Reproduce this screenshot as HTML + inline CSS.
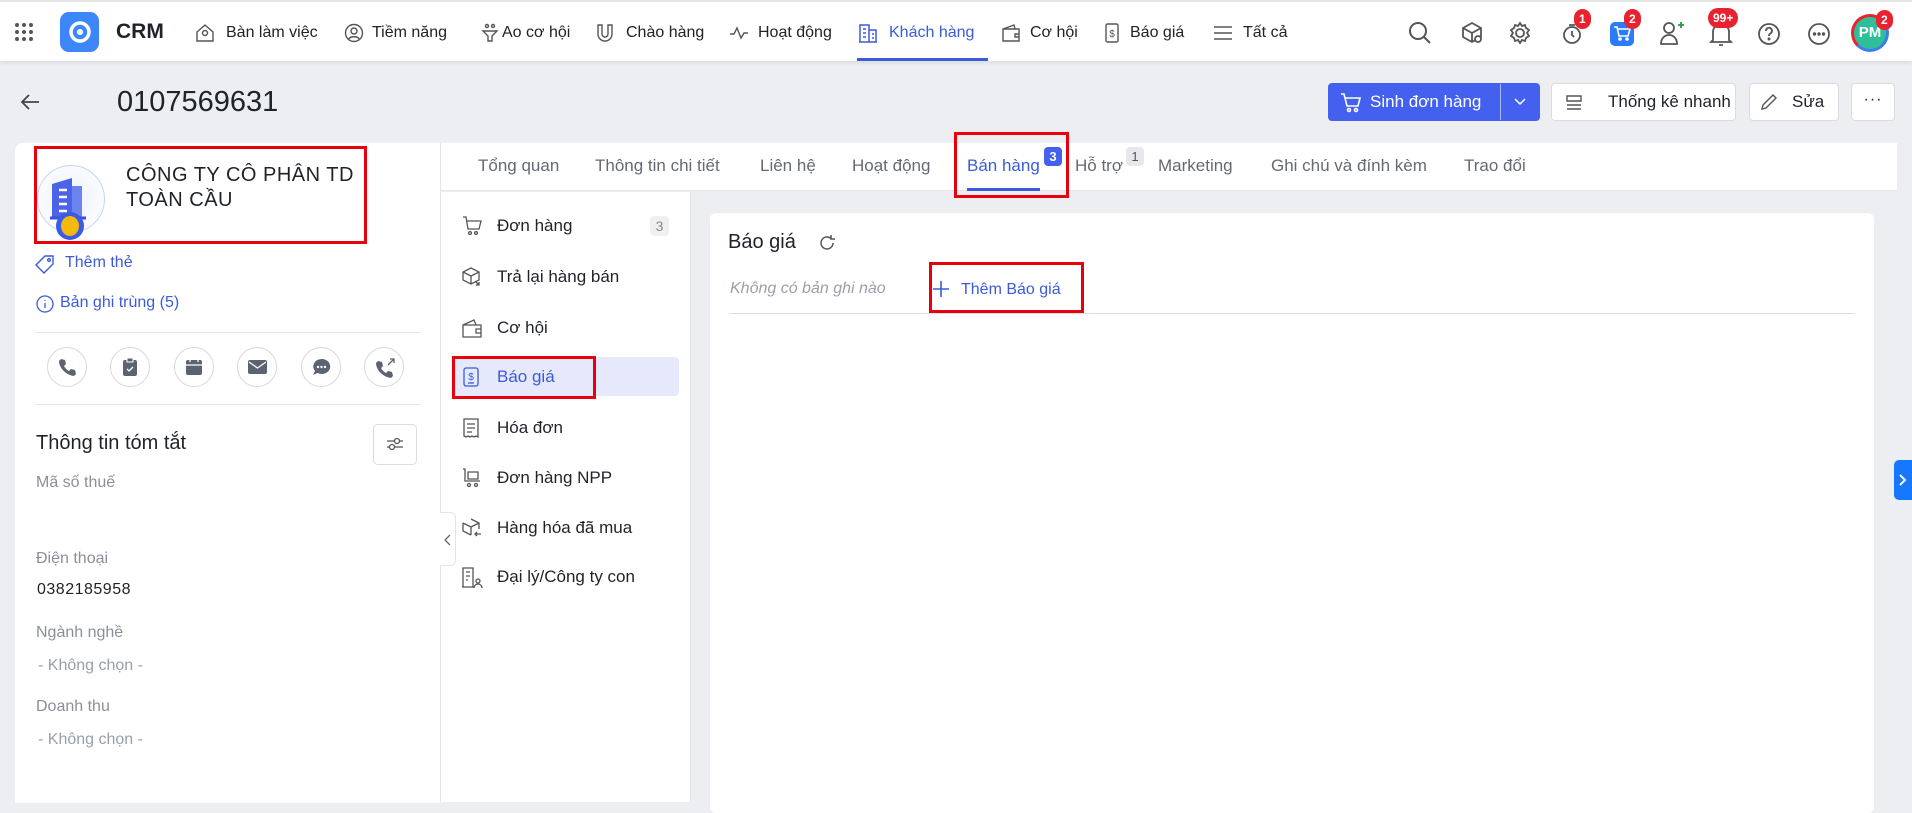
<!DOCTYPE html>
<html><head><meta charset="utf-8"><style>
*{box-sizing:border-box;margin:0;padding:0}
body{width:1912px;height:797px;overflow:hidden;background:#eceef1;font-family:"Liberation Sans","Noto Sans CJK SC",sans-serif;color:#1f2329;position:relative}
.a{position:absolute;white-space:nowrap}
.nav{position:absolute;left:0;top:0;width:1912px;height:61px;background:#fff;border-top:2px solid #e6e6e6;box-shadow:0 2px 4px rgba(0,0,0,.08)}
.ni{font-size:16px;color:#222;top:22px}
svg{overflow:visible}
.badge{position:absolute;background:#e8232f;color:#fff;font-size:12px;font-weight:bold;border-radius:10px;height:20px;line-height:20px;text-align:center;padding:0 5px}
.btn{position:absolute;background:#fff;border:1px solid #d9dce1;border-radius:4px;height:38px;top:83px;font-size:17px;line-height:36px}
.tab{top:156px;font-size:17px;color:#646a73}
.sn{font-size:17px;color:#1f2329}
.lbl{font-size:16px;color:#8a8f99;left:36px}
.circ{position:absolute;width:40px;height:40px;border:1px solid #d6d8dc;border-radius:50%;top:347px}
.red{position:absolute;border:3px solid #e8000b}
</style></head><body>
<div class="nav">
 <svg class="a" style="left:14px;top:20px" width="20" height="20"><g fill="#555"><circle cx="3" cy="3" r="2"/><circle cx="10" cy="3" r="2"/><circle cx="17" cy="3" r="2"/><circle cx="3" cy="10" r="2"/><circle cx="10" cy="10" r="2"/><circle cx="17" cy="10" r="2"/><circle cx="3" cy="17" r="2"/><circle cx="10" cy="17" r="2"/><circle cx="17" cy="17" r="2"/></g></svg>
 <div class="a" style="left:60px;top:10px;width:39px;height:40px;background:#3c86f7;border-radius:9px"></div>
 <svg class="a" style="left:68px;top:18px" width="24" height="24"><circle cx="12" cy="12" r="9" fill="none" stroke="#fff" stroke-width="3.5"/><circle cx="12" cy="12" r="3" fill="#fff"/></svg>
 <div class="a" style="left:116px;top:18px;font-size:21px;font-weight:bold">CRM</div>
 <svg class="a" style="left:195px;top:21px" width="20" height="20" fill="none" stroke="#555" stroke-width="1.4"><path d="M2 9L10 2l8 7v9H2z"/><circle cx="10" cy="10" r="2.5"/></svg>
 <div class="a ni" style="left:226px">Bàn làm việc</div>
 <svg class="a" style="left:344px;top:21px" width="20" height="20" fill="none" stroke="#555" stroke-width="1.4"><circle cx="10" cy="10" r="8.5"/><circle cx="10" cy="8" r="3"/><path d="M5 16c1-3 9-3 10 0"/></svg>
 <div class="a ni" style="left:372px">Tiềm năng</div>
 <svg class="a" style="left:480px;top:21px" width="20" height="20" fill="none" stroke="#555" stroke-width="1.4"><circle cx="7" cy="3" r="1.5"/><circle cx="13" cy="3" r="1.5"/><path d="M3 8h14l-5 5v5h-4v-5z"/></svg>
 <div class="a ni" style="left:502px">Ao cơ hội</div>
 <svg class="a" style="left:595px;top:21px" width="20" height="20" fill="none" stroke="#555" stroke-width="1.4"><path d="M3 2v9a7 7 0 0014 0V2h-4v9a3 3 0 01-6 0V2z"/></svg>
 <div class="a ni" style="left:626px">Chào hàng</div>
 <svg class="a" style="left:729px;top:21px" width="20" height="20" fill="none" stroke="#555" stroke-width="1.4"><path d="M1 11h4l3-6 4 10 3-5h4"/></svg>
 <div class="a ni" style="left:758px">Hoạt động</div>
 <svg class="a" style="left:858px;top:21px" width="20" height="20" fill="none" stroke="#3b5bdb" stroke-width="1.5"><path d="M2 19V2h9v17M11 7h7v12M1 19h18M5 6h3M5 10h3M5 14h3M14 11h2M14 15h2"/></svg>
 <div class="a ni" style="left:889px;color:#3b5bdb">Khách hàng</div>
 <div class="a" style="left:857px;top:56px;width:131px;height:3px;background:#3b5bdb"></div>
 <svg class="a" style="left:1001px;top:21px" width="20" height="20" fill="none" stroke="#555" stroke-width="1.4"><path d="M2 6h16v12H2zM2 6l11-4 1 4M14 11h4v3h-4z"/></svg>
 <div class="a ni" style="left:1030px">Cơ hội</div>
 <svg class="a" style="left:1102px;top:21px" width="20" height="20" fill="none" stroke="#555" stroke-width="1.4"><rect x="4" y="1" width="12" height="18" rx="1.5"/><text x="10" y="14" font-size="10" text-anchor="middle" fill="#555" stroke="none">$</text></svg>
 <div class="a ni" style="left:1130px">Báo giá</div>
 <svg class="a" style="left:1213px;top:21px" width="20" height="20" stroke="#555" stroke-width="1.6"><path d="M1 4h18M1 10h18M1 16h18"/></svg>
 <div class="a ni" style="left:1243px">Tất cả</div>

 <svg class="a" style="left:1408px;top:19px" width="24" height="24" fill="none" stroke="#555" stroke-width="2"><circle cx="10" cy="10" r="8"/><path d="M16 16l6 6"/></svg>
 <svg class="a" style="left:1460px;top:19px" width="24" height="24" fill="none" stroke="#555" stroke-width="1.8"><path d="M12 2l9 5v9l-9 5-9-5V7zM3 7l9 5 9-5M12 12v9"/><circle cx="18" cy="18" r="3" fill="#fff"/></svg>
 <svg class="a" style="left:1508px;top:19px" width="24" height="24" fill="none" stroke="#555" stroke-width="1.8"><circle cx="12" cy="12" r="4"/><path d="M12 2l2 3 3-1 1 3 3 2-2 3 2 3-3 2-1 3-3-1-2 3-2-3-3 1-1-3-3-2 2-3-2-3 3-2 1-3 3 1z"/></svg>
 <svg class="a" style="left:1560px;top:20px" width="24" height="24" fill="none" stroke="#555" stroke-width="1.8"><circle cx="12" cy="13" r="8"/><path d="M12 9v4l2 2M9 3h6"/></svg>
 <div class="badge" style="left:1574px;top:7px">1</div>
 <div class="a" style="left:1610px;top:20px;width:24px;height:24px;background:#2b7cf6;border-radius:5px"></div>
 <svg class="a" style="left:1613px;top:24px" width="18" height="16" fill="none" stroke="#fff" stroke-width="1.6"><path d="M1 1h3l2 9h9l2-7H5"/><circle cx="7" cy="13" r="1"/><circle cx="14" cy="13" r="1"/></svg>
 <div class="badge" style="left:1624px;top:7px">2</div>
 <svg class="a" style="left:1659px;top:18px" width="26" height="26" fill="none" stroke="#555" stroke-width="1.8"><circle cx="10" cy="8" r="5"/><path d="M2 24c0-6 4-9 8-9s8 3 8 9z"/><path d="M19 5h6M22 2v6" stroke="#2a9d3a"/></svg>
 <svg class="a" style="left:1709px;top:19px" width="24" height="26" fill="none" stroke="#555" stroke-width="1.8"><path d="M4 19V11a8 8 0 0116 0v8l2 2H2zM10 24h4"/></svg>
 <div class="badge" style="left:1708px;top:6px">99+</div>
 <svg class="a" style="left:1757px;top:20px" width="24" height="24" fill="none" stroke="#555" stroke-width="1.8"><circle cx="12" cy="12" r="10"/><path d="M9 9a3 3 0 115 2c-1 1-2 1-2 3"/><circle cx="12" cy="17" r=".6" fill="#555"/></svg>
 <svg class="a" style="left:1807px;top:20px" width="24" height="24" fill="none" stroke="#555" stroke-width="1.8"><circle cx="12" cy="12" r="10"/><circle cx="7.5" cy="12" r=".8" fill="#555"/><circle cx="12" cy="12" r=".8" fill="#555"/><circle cx="16.5" cy="12" r=".8" fill="#555"/></svg>
 <div class="a" style="left:1851px;top:12px;width:38px;height:38px;border-radius:50%;border:3px solid #e8232f;border-right-color:#3b7df0;border-bottom-color:#3b7df0;background:#2fbf98;color:#fff;font-weight:bold;font-size:15px;line-height:32px;text-align:center">PM</div>
 <div class="badge" style="left:1876px;top:8px">2</div>
</div>

<svg class="a" style="left:20px;top:93px" width="20" height="18" fill="none" stroke="#444" stroke-width="1.8"><path d="M19 9H2M9 2L2 9l7 7"/></svg>
<div class="a" style="left:117px;top:86px;font-size:29px;color:#1f2329">0107569631</div>
<div class="btn" style="left:1328px;width:212px;background:#4361ee;border-color:#4361ee;color:#fff"></div>
<svg class="a" style="left:1340px;top:93px" width="22" height="20" fill="none" stroke="#fff" stroke-width="1.6"><path d="M1 1h3l3 12h11l2-8H5"/><circle cx="9" cy="17" r="1.5"/><circle cx="16" cy="17" r="1.5"/></svg>
<div class="a" style="left:1370px;top:92px;color:#fff;font-size:17px">Sinh đơn hàng</div>
<div class="a" style="left:1500px;top:84px;width:1px;height:36px;background:#aab8f6"></div>
<svg class="a" style="left:1514px;top:98px" width="12" height="8" fill="none" stroke="#fff" stroke-width="1.5"><path d="M1 1l5 5 5-5"/></svg>
<div class="btn" style="left:1551px;width:185px;padding-left:56px">Thống kê nhanh</div>
<svg class="a" style="left:1566px;top:94px" width="16" height="16" fill="none" stroke="#555" stroke-width="1.4"><path d="M1 2h14v5H1zM1 11h14M1 15h14"/></svg>
<div class="btn" style="left:1749px;width:90px;padding-left:42px">Sửa</div>
<svg class="a" style="left:1760px;top:93px" width="18" height="18" fill="none" stroke="#555" stroke-width="1.4"><path d="M2 16l1-4L13 2l3 3L6 15z"/></svg>
<div class="btn" style="left:1851px;width:44px;text-align:center;font-size:16px;letter-spacing:1px;line-height:32px">···</div>

<!-- left panel -->
<div class="a" style="left:15px;top:143px;width:425px;height:660px;background:#fff;border-radius:8px 0 0 0"></div>
<div class="a" style="left:37px;top:165px;width:68px;height:68px;border-radius:50%;border:1px solid #c7d2f7;background:radial-gradient(circle,#eef1fd,#fff)"></div>
<svg class="a" style="left:50px;top:176px" width="40" height="46"><path d="M2 42V8l20-6v40z" fill="#4a63e8"/><path d="M22 10h10v32H22z" fill="#6d83f0"/><path d="M0 42h36" stroke="#3a52d8" stroke-width="3"/><g stroke="#fff" stroke-width="2.5"><path d="M9 14h8M9 21h8M9 28h8M9 35h8"/></g></svg>
<div class="a" style="left:56px;top:212px;width:28px;height:28px;border-radius:50%;background:#3a5ae8"></div>
<div class="a" style="left:61px;top:216px;width:18px;height:20px;border-radius:50%;background:#f5b80d"></div>
<div class="a" style="left:126px;top:163px;font-size:20px;line-height:25px;letter-spacing:.5px">CÔNG TY CÔ PHÂN TD<br>TOÀN CẦU</div>
<div class="red" style="left:34px;top:146px;width:333px;height:98px"></div>
<svg class="a" style="left:36px;top:254px" width="20" height="20" fill="none" stroke="#3b5bdb" stroke-width="1.4"><path d="M9 2h8v8l-9 9-8-8z"/><circle cx="13" cy="6" r="1.3"/></svg>
<div class="a" style="left:65px;top:254px;font-size:16px;color:#3b5bdb">Thêm thẻ</div>
<svg class="a" style="left:36px;top:295px" width="18" height="18" fill="none" stroke="#3b5bdb" stroke-width="1.3"><circle cx="9" cy="9" r="8"/><path d="M9 8v5M9 5v1"/></svg>
<div class="a" style="left:60px;top:294px;font-size:16px;color:#3b5bdb">Bản ghi trùng (5)</div>
<div class="a" style="left:35px;top:332px;width:385px;height:1px;background:#e3e5e8"></div>
<div class="circ" style="left:47px"></div><div class="circ" style="left:110px"></div><div class="circ" style="left:174px"></div><div class="circ" style="left:237px"></div><div class="circ" style="left:301px"></div><div class="circ" style="left:364px"></div>
<svg class="a" style="left:58px;top:358px" width="18" height="18" fill="#5c6370"><path d="M3 1l4 1 1 4-2 2c1 2 3 4 5 5l2-2 4 1 1 4-2 2C8 17 1 10 1 3z"/></svg>
<svg class="a" style="left:122px;top:357px" width="16" height="20"><rect x="1" y="3" width="14" height="16" rx="2" fill="#5c6370"/><rect x="5" y="1" width="6" height="4" fill="#5c6370" stroke="#fff"/><path d="M5 12l2 2 4-4" stroke="#fff" fill="none" stroke-width="1.3"/></svg>
<svg class="a" style="left:185px;top:357px" width="18" height="19"><rect x="1" y="3" width="16" height="15" rx="2" fill="#5c6370"/><path d="M5 1v4M13 1v4M1 8h16" stroke="#fff" stroke-width="1.3"/></svg>
<svg class="a" style="left:248px;top:360px" width="19" height="14"><rect width="19" height="14" rx="2" fill="#5c6370"/><path d="M1 2l8.5 6L18 2" stroke="#fff" fill="none" stroke-width="1.3"/></svg>
<svg class="a" style="left:312px;top:358px" width="19" height="19"><path d="M9.5 1a8.5 7.5 0 11-4 14L1 17l2-4A8.5 7.5 0 019.5 1z" fill="#5c6370"/><g fill="#fff"><circle cx="6" cy="9" r="1.2"/><circle cx="9.5" cy="9" r="1.2"/><circle cx="13" cy="9" r="1.2"/></g></svg>
<svg class="a" style="left:375px;top:358px" width="20" height="19"><path d="M3 3l4 1 1 4-2 2c1 2 3 4 5 5l2-2 4 1 1 4-2 2C8 19 1 12 1 5z" fill="#5c6370"/><path d="M13 7l6-6M15 1h4v4" stroke="#5c6370" fill="none" stroke-width="1.3"/></svg>
<div class="a" style="left:35px;top:404px;width:385px;height:1px;background:#e3e5e8"></div>
<div class="a" style="left:36px;top:432px;font-size:20px">Thông tin tóm tắt</div>
<div class="a" style="left:373px;top:424px;width:44px;height:41px;border:1px solid #d9dce1;border-radius:5px"></div>
<svg class="a" style="left:386px;top:434px" width="18" height="20" fill="none" stroke="#555" stroke-width="1.3"><path d="M1 7h16M1 13h16"/><circle cx="11" cy="7" r="2.5" fill="#fff"/><circle cx="6" cy="13" r="2.5" fill="#fff"/></svg>
<div class="a lbl" style="top:474px">Mã số thuế</div>
<div class="a lbl" style="top:550px">Điện thoại</div>
<div class="a" style="left:37px;top:581px;font-size:16px;color:#1f2329;letter-spacing:.5px">0382185958</div>
<div class="a lbl" style="top:624px">Ngành nghề</div>
<div class="a lbl" style="top:657px;left:38px;color:#9aa0a8">- Không chọn -</div>
<div class="a lbl" style="top:698px">Doanh thu</div>
<div class="a lbl" style="top:731px;left:38px;color:#9aa0a8">- Không chọn -</div>

<!-- right area -->
<div class="a" style="left:440px;top:143px;width:1457px;height:48px;background:#fff;border-left:1px solid #e3e5e8;border-bottom:1px solid #e3e5e8"></div>
<div class="a tab" style="left:478px">Tổng quan</div>
<div class="a tab" style="left:595px">Thông tin chi tiết</div>
<div class="a tab" style="left:760px">Liên hệ</div>
<div class="a tab" style="left:852px">Hoạt động</div>
<div class="a tab" style="left:967px;color:#3b5bdb">Bán hàng</div>
<div class="a" style="left:1044px;top:147px;width:18px;height:19px;background:#4361ee;color:#fff;border-radius:4px;font-size:13px;font-weight:bold;text-align:center;line-height:19px">3</div>
<div class="a" style="left:967px;top:188px;width:73px;height:3px;background:#3b5bdb"></div>
<div class="red" style="left:954px;top:132px;width:115px;height:66px"></div>
<div class="a tab" style="left:1075px">Hỗ trợ</div>
<div class="a" style="left:1126px;top:147px;width:18px;height:19px;background:#e6e8eb;color:#555;border-radius:4px;font-size:13px;text-align:center;line-height:19px">1</div>
<div class="a tab" style="left:1158px">Marketing</div>
<div class="a tab" style="left:1271px">Ghi chú và đính kèm</div>
<div class="a tab" style="left:1464px">Trao đổi</div>

<div class="a" style="left:440px;top:192px;width:251px;height:610px;background:#fff;border-left:1px solid #e3e5e8;border-right:1px solid #e3e5e8"></div>
<div class="a" style="left:440px;top:512px;width:16px;height:54px;background:#fff;border:1px solid #e3e5e8;border-left:none;border-radius:0 6px 6px 0"></div>
<svg class="a" style="left:444px;top:534px" width="7" height="12" fill="none" stroke="#666" stroke-width="1.3"><path d="M6 1L1 6l5 5"/></svg>
<div class="a" style="left:452px;top:357px;width:227px;height:39px;background:#e6e9fb;border-radius:4px"></div>
<div class="red" style="left:452px;top:356px;width:144px;height:43px"></div>
<svg class="a" style="left:462px;top:216px" width="20" height="20" fill="none" stroke="#555" stroke-width="1.3"><path d="M1 1h3l2 12h11l2-8H5"/><circle cx="8" cy="17" r="1.4"/><circle cx="14" cy="17" r="1.4"/></svg>
<div class="a sn" style="left:497px;top:216px">Đơn hàng</div>
<div class="a" style="left:650px;top:216px;width:19px;height:20px;background:#eef0f2;border-radius:4px;color:#888;font-size:14px;text-align:center;line-height:20px">3</div>
<svg class="a" style="left:462px;top:267px" width="20" height="20" fill="none" stroke="#555" stroke-width="1.3"><path d="M9 1l8 4v8l-8 4-8-4V5zM1 5l8 4 8-4M9 9v8M14 15l3 3M17 15v3h-3"/></svg>
<div class="a sn" style="left:497px;top:267px">Trả lại hàng bán</div>
<svg class="a" style="left:462px;top:318px" width="20" height="20" fill="none" stroke="#555" stroke-width="1.3"><path d="M1 7h18v12H1zM1 7l11-5 2 5M14 11h5v4h-5z"/></svg>
<div class="a sn" style="left:497px;top:318px">Cơ hội</div>
<svg class="a" style="left:463px;top:367px" width="16" height="20" fill="none" stroke="#3b5bdb" stroke-width="1.3"><rect x="1" y="1" width="14" height="18" rx="2"/><text x="8" y="13" font-size="10" fill="#3b5bdb" stroke="none" text-anchor="middle">$</text><path d="M5 16h6"/></svg>
<div class="a sn" style="left:497px;top:367px;color:#3b5bdb">Báo giá</div>
<svg class="a" style="left:463px;top:418px" width="16" height="20" fill="none" stroke="#555" stroke-width="1.3"><path d="M1 1h14v18l-2-1-2 1-2-1-2 1-2-1-2 1-2-1zM4 6h8M4 10h8M4 14h5"/></svg>
<div class="a sn" style="left:497px;top:418px">Hóa đơn</div>
<svg class="a" style="left:462px;top:468px" width="20" height="20" fill="none" stroke="#555" stroke-width="1.3"><path d="M1 1h2v12h15M6 4h10v7H6z"/><circle cx="7" cy="17" r="1.5"/><circle cx="14" cy="17" r="1.5"/></svg>
<div class="a sn" style="left:497px;top:468px">Đơn hàng NPP</div>
<svg class="a" style="left:462px;top:518px" width="20" height="20" fill="none" stroke="#555" stroke-width="1.3"><path d="M9 1l8 4v6M1 5v8l8 4M1 5l8 4 8-4M9 9v8M19 16h-6M15 14l-2 2 2 2"/></svg>
<div class="a sn" style="left:497px;top:518px">Hàng hóa đã mua</div>
<svg class="a" style="left:462px;top:567px" width="20" height="22" fill="none" stroke="#555" stroke-width="1.3"><path d="M1 20V1h10v19zM4 5h4M4 9h4M4 13h2M0 20h12"/><circle cx="16" cy="14" r="2"/><path d="M12 21a4 4 0 018 0"/></svg>
<div class="a sn" style="left:497px;top:567px">Đại lý/Công ty con</div>

<div class="a" style="left:710px;top:213px;width:1164px;height:600px;background:#fff;border-radius:6px"></div>
<div class="a" style="left:728px;top:231px;font-size:20px">Báo giá</div>
<svg class="a" style="left:818px;top:234px" width="18" height="18" fill="none" stroke="#555" stroke-width="1.5"><path d="M15 9a6 6 0 11-2-4.5M13 1v4h4"/></svg>
<div class="a" style="left:730px;top:280px;font-size:16px;font-style:italic;color:#9aa0a8">Không có bản ghi nào</div>
<svg class="a" style="left:932px;top:280px" width="18" height="18" stroke="#3b5bdb" stroke-width="1.6"><path d="M9 1v16M1 9h16"/></svg>
<div class="a" style="left:961px;top:281px;font-size:16px;color:#3b5bdb">Thêm Báo giá</div>
<div class="red" style="left:929px;top:262px;width:155px;height:51px"></div>
<div class="a" style="left:729px;top:313px;width:1126px;height:1px;background:#dcdfe3"></div>

<div class="a" style="left:1894px;top:460px;width:18px;height:40px;background:#1677ff;border-radius:5px 0 0 5px"></div>
<svg class="a" style="left:1899px;top:474px" width="8" height="12" fill="none" stroke="#fff" stroke-width="2"><path d="M1 1l5 5-5 5"/></svg>
</body></html>
